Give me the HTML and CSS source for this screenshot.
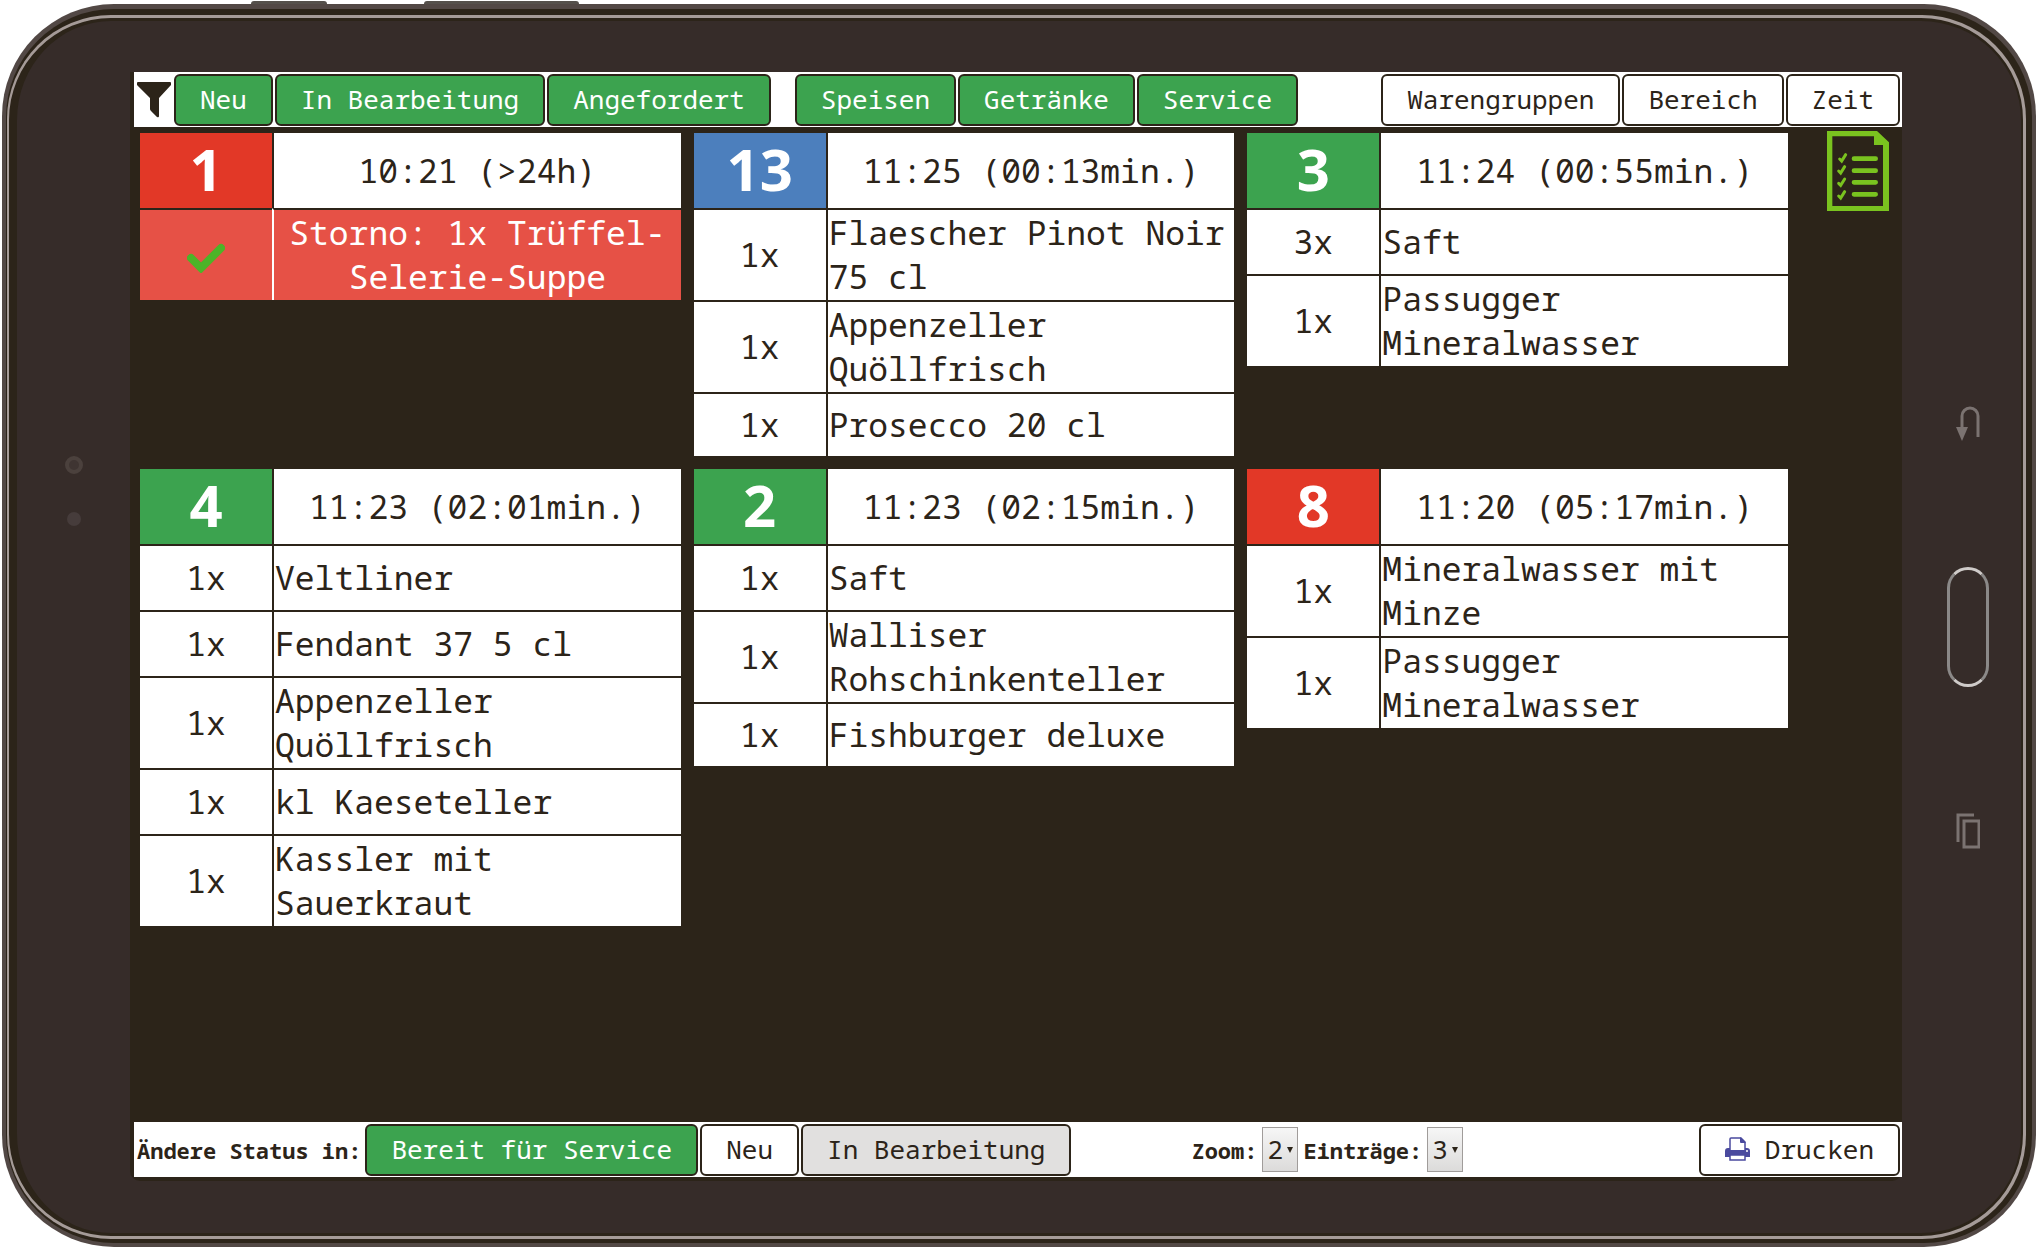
FILE: index.html
```html
<!doctype html>
<html lang="de">
  <head>
    <meta charset="UTF-8" />
    <title>Bestellmonitor</title>
    <link rel="stylesheet" href="styles.css">
  </head>
  <body>
    <div class="side-keys">
      <span class="key-power"></span>
      <span class="key-volume"></span>
    </div>

    <div class="tablet">
      <div class="rim">
        <div class="edge">
          <div class="bezel">
            <div class="camera">
              <span class="lens"></span>
              <span class="sensor"></span>
            </div>

            <main class="screen">
              <!-- Filter -->
              <div class="bar">
                <svg class="funnel" viewBox="0 0 34 36" aria-hidden="true">
                  <path d="M1 0H33Q34 0 34 1V3L22 16V34Q22 36 20 35L14 29Q13 28 13 27V16L0 3V1Q0 0 1 0Z" fill="#2c2419" />
                </svg>
                <button class="btn green">Neu</button>
                <button class="btn green">In Bearbeitung</button>
                <button class="btn green">Angefordert</button>
                <div class="group">
                  <button class="btn green">Speisen</button>
                  <button class="btn green">Getränke</button>
                  <button class="btn green">Service</button>
                </div>
                <div class="group right">
                  <button class="btn">Warengruppen</button>
                  <button class="btn">Bereich</button>
                  <button class="btn">Zeit</button>
                </div>
              </div>

              <!-- Orders -->
              <div class="content">
                <div class="orders">
                  <table class="order">
                    <thead>
                      <tr><th class="number red">1</th><th class="time">10:21 (&gt;24h)</th></tr>
                    </thead>
                    <tbody>
                      <tr class="storno">
                        <td class="count">
                          <svg class="check" viewBox="0 0 38 30" aria-label="Erledigt">
                            <path d="M4 15L14 25L34 5" fill="none" stroke="#4cb428" stroke-width="8" stroke-linecap="round" />
                          </svg>
                        </td>
                        <td>Storno: 1x Trüffel-Selerie-Suppe</td>
                      </tr>
                    </tbody>
                  </table>

                  <table class="order">
                    <thead>
                      <tr><th class="number blue">13</th><th class="time">11:25 (00:13min.)</th></tr>
                    </thead>
                    <tbody>
                      <tr><td class="count">1x</td><td>Flaescher Pinot Noir 75 cl</td></tr>
                      <tr><td class="count">1x</td><td>Appenzeller Quöllfrisch</td></tr>
                      <tr><td class="count">1x</td><td>Prosecco 20 cl</td></tr>
                    </tbody>
                  </table>

                  <table class="order">
                    <thead>
                      <tr><th class="number green">3</th><th class="time">11:24 (00:55min.)</th></tr>
                    </thead>
                    <tbody>
                      <tr><td class="count">3x</td><td>Saft</td></tr>
                      <tr><td class="count">1x</td><td>Passugger Mineralwasser</td></tr>
                    </tbody>
                  </table>

                  <table class="order">
                    <thead>
                      <tr><th class="number green">4</th><th class="time">11:23 (02:01min.)</th></tr>
                    </thead>
                    <tbody>
                      <tr><td class="count">1x</td><td>Veltliner</td></tr>
                      <tr><td class="count">1x</td><td>Fendant 37 5 cl</td></tr>
                      <tr><td class="count">1x</td><td>Appenzeller Quöllfrisch</td></tr>
                      <tr><td class="count">1x</td><td>kl Kaeseteller</td></tr>
                      <tr><td class="count">1x</td><td>Kassler mit Sauerkraut</td></tr>
                    </tbody>
                  </table>

                  <table class="order">
                    <thead>
                      <tr><th class="number green">2</th><th class="time">11:23 (02:15min.)</th></tr>
                    </thead>
                    <tbody>
                      <tr><td class="count">1x</td><td>Saft</td></tr>
                      <tr><td class="count">1x</td><td>Walliser Rohschinkenteller</td></tr>
                      <tr><td class="count">1x</td><td>Fishburger deluxe</td></tr>
                    </tbody>
                  </table>

                  <table class="order">
                    <thead>
                      <tr><th class="number red">8</th><th class="time">11:20 (05:17min.)</th></tr>
                    </thead>
                    <tbody>
                      <tr><td class="count">1x</td><td>Mineralwasser mit Minze</td></tr>
                      <tr><td class="count">1x</td><td>Passugger Mineralwasser</td></tr>
                    </tbody>
                  </table>
                </div>

                <div class="tools">
                  <button class="list-btn" aria-label="Liste">
                    <svg viewBox="0 0 186 240">
                      <path fill="#7ac31f" fill-rule="evenodd" d="M0 0H150L186 34V240H0ZM16 16V225H168V42H141V16Z" />
                      <g fill="none" stroke="#7ac31f" stroke-linecap="round">
                        <path stroke-width="14" d="M81 83H146M81 119H146M81 154H146M81 190H146" />
                        <path stroke-width="9" d="M38 84L44 90L56 71M35 120L41 126L53 107M35 157L41 163L53 144M35 195L41 201L53 182" />
                      </g>
                    </svg>
                  </button>
                </div>
              </div>

              <!-- Status -->
              <div class="bar">
                <span class="label status">Ändere Status in:</span>
                <button class="btn green">Bereit für Service</button>
                <button class="btn">Neu</button>
                <button class="btn grey">In Bearbeitung</button>
                <div class="settings">
                  <label class="label" for="zoom">Zoom:</label>
                  <span class="select">
                    <select id="zoom">
                      <option>1</option>
                      <option selected>2</option>
                      <option>3</option>
                    </select>
                  </span>
                  <label class="label" for="entries">Einträge:</label>
                  <span class="select">
                    <select id="entries">
                      <option>2</option>
                      <option selected>3</option>
                      <option>4</option>
                    </select>
                  </span>
                </div>
                <button class="btn print">
                  <svg viewBox="0 0 25 24" aria-hidden="true">
                    <path fill="#fff" stroke="#4a4a9e" stroke-width="1.5" d="M5 14V2Q5 1 6 1H16L20 5V14" />
                    <path fill="#4a4a9e" d="M15 0L21 6H16Q15 6 15 5ZM3 11H5V13H20V11H22Q25 11 25 14V20H0V14Q0 11 3 11Z" />
                    <path fill="#fff" stroke="#4a4a9e" stroke-width="1.5" d="M5 18H20V23H5Z" />
                    <circle cx="22" cy="14" r="1" fill="#fff" />
                  </svg>
                  Drucken
                </button>
              </div>
            </main>

            <div class="nav">
              <svg class="nav-icon" viewBox="0 0 24 36" aria-hidden="true">
                <path d="M6 22V11A8 8 0 0 1 22 11V32" fill="none" stroke="#7b7371" stroke-width="3" />
                <path d="M0 22H12L6 36Z" fill="#7b7371" />
              </svg>
              <span class="home"></span>
              <svg class="nav-icon" viewBox="0 0 24 36" aria-hidden="true">
                <path d="M2 29V2H18M8 8H23V34H8Z" fill="none" stroke="#7b7371" stroke-width="3" />
              </svg>
            </div>
          </div>
        </div>
      </div>
    </div>
  </body>
</html>
```
FILE: styles.css
```css
* {
  box-sizing: border-box;
}

body {
  margin: 0;
  background: #fff;
  color: #2c2419;
  font-family: "Noto Mono", "Noto Sans Mono", "DejaVu Sans Mono", monospace;
  font-size: 26px;
  display: flex;
  flex-direction: column;
  min-height: 100vh;
  padding: 0 1px 2px 2px;
}

/* Tablet */
.side-keys {
  display: flex;
  gap: 97px;
  height: 4px;
  padding: 1px 0 0 249px;
}

.side-keys span {
  background: #55504b;
  border-radius: 4px 4px 0 0;
}

.key-power {
  width: 76px;
}

.key-volume {
  width: 155px;
}

.tablet,
.rim,
.edge,
.bezel {
  display: flex;
  flex: 1;
}

.tablet {
  background: #524845;
  border-radius: 112px;
  padding: 5px 4px 4px 4px;
}

.rim {
  background: #2c2419;
  border-radius: 108px;
  padding: 6px 6px 4px 1px;
}

.edge {
  background: #a59b98;
  border-radius: 104px;
  padding: 3px 3px 3px 2px;
}

.bezel {
  background: #362c29;
  border: 3px solid #2c2419;
  border-left-width: 8px;
  border-right-width: 2px;
  border-radius: 102px;
  padding: 51px 0 52px;
}

.camera {
  width: 113px;
  display: flex;
  flex-direction: column;
  align-items: center;
  justify-content: center;
  gap: 38px;
  padding-bottom: 272px;
}

.lens {
  width: 18px;
  height: 18px;
  border: 4px solid #4b413d;
  border-radius: 50%;
  background: #3f3532;
}

.sensor {
  width: 14px;
  height: 14px;
  border-radius: 50%;
  background: #463c3b;
}

.nav {
  width: 119px;
  display: flex;
  flex-direction: column;
  align-items: center;
  justify-content: center;
  gap: 126px;
  padding-left: 12px;
}

.nav-icon {
  width: 24px;
  height: 36px;
}

.home {
  width: 42px;
  height: 120px;
  border: 3px solid #8b8988;
  border-top-color: #cfcbc9;
  border-bottom-color: #cfcbc9;
  border-radius: 21px;
}

/* Screen */
.screen {
  flex: 1;
  display: flex;
  flex-direction: column;
  background: #2c2419;
  border-radius: 0 0 10px 10px;
  padding: 0 0 4px 4px;
}

.bar {
  display: flex;
  align-items: center;
  gap: 2px;
  height: 55px;
  padding: 0 2px;
  background: #fff;
}

.btn {
  height: 52px;
  padding: 0 24px 2px;
  border: 2px solid #2c2419;
  border-radius: 6px;
  background: #fff;
  color: #2c2419;
  font: inherit;
  white-space: nowrap;
  cursor: pointer;
}

.green {
  background: #3ca34f;
  color: #fff;
}

.red {
  background: #e23827;
}

.blue {
  background: #4c7fbd;
}

.grey {
  background: #e1e0df;
}

.group {
  display: flex;
  gap: 2px;
  margin-left: 22px;
}

.group.right,
.print {
  margin-left: auto;
}

.funnel {
  width: 34px;
  height: 36px;
  margin: 0 1px;
}

.label {
  font-size: 22px;
  font-weight: bold;
  white-space: nowrap;
}

.status {
  padding: 0 2px 0 1px;
}

.settings {
  display: flex;
  align-items: center;
  gap: 5px;
  margin-left: 118px;
}

.select {
  position: relative;
}

.select::after {
  content: "";
  position: absolute;
  right: 5px;
  top: 20px;
  border: 3px solid transparent;
  border-top: 6px solid #2c2419;
  border-bottom: 0;
  pointer-events: none;
}

.select select {
  appearance: none;
  display: block;
  width: 36px;
  height: 45px;
  padding: 0 0 2px 4px;
  border: 1px solid #a09c9a;
  border-radius: 0;
  background: linear-gradient(#f6f6f6, #dcdbda);
  color: #2c2419;
  font: inherit;
}

.print {
  display: flex;
  align-items: center;
  gap: 15px;
}

.print svg {
  width: 25px;
  height: 24px;
}

/* Orders */
.content {
  flex: 1;
  display: flex;
  align-items: flex-start;
}

.orders {
  flex: 1;
  display: grid;
  grid-template-columns: repeat(3, 1fr);
  align-items: start;
  gap: 13px;
  padding: 6px 0 6px 6px;
}

.order {
  width: 100%;
  table-layout: fixed;
  border-spacing: 0;
  font-size: 33px;
  line-height: 44px;
}

.order th {
  height: 75px;
  padding: 0;
}

.order .number {
  width: 132px;
  padding-bottom: 4px;
  color: #fff;
  font-family: "Noto Sans", sans-serif;
  font-size: 58px;
}

.order .time {
  border-left: 2px solid #2c2419;
  background: #fff;
  font-weight: normal;
}

.order td {
  height: 66px;
  padding: 1px;
  border-top: 2px solid #2c2419;
  border-left: 2px solid #2c2419;
  background: #fff;
}

.order tr:last-child td {
  height: 64px;
}

.order .count {
  border-left: 0;
  text-align: center;
}

.order .storno td {
  border-left-color: #fff;
  background: #e65146;
  color: #fff;
  text-align: center;
}

.check {
  width: 38px;
  height: 30px;
  vertical-align: middle;
}

.tools {
  width: 114px;
  display: flex;
  justify-content: center;
  padding: 4px 0 0 26px;
}

.tools,
.camera,
.nav {
  flex-shrink: 0;
}

.list-btn {
  padding: 0;
  border: 0;
  background: none;
  cursor: pointer;
}

.list-btn svg {
  display: block;
  width: 62px;
  height: 80px;
}
```
